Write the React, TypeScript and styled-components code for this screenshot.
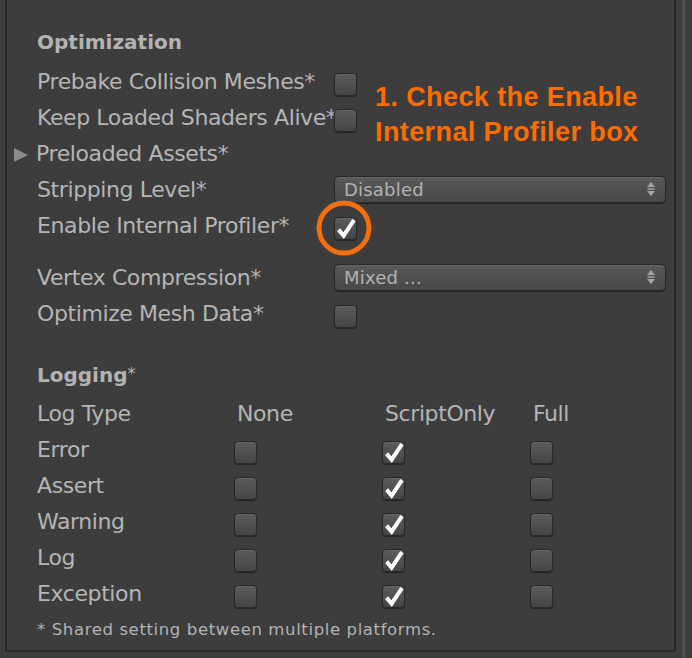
import React from "react";
import styled, { createGlobalStyle } from "styled-components";

const Global = createGlobalStyle`
  html, body { margin: 0; padding: 0; background: #3d3d3d; }
  body { font-family: "DejaVu Sans", "Open Sans", sans-serif; }
`;

const Page = styled.div`
  display: flex;
  align-items: flex-start;
  height: 658px;
  overflow: hidden;
`;

const Panel = styled.div`
  position: relative;
  box-sizing: border-box;
  width: 671px;
  margin-left: 5px;
  padding: 26px 7px 10px 30px;
  border: 2px solid #262626;
  border-top: none;
  border-radius: 0 0 3px 3px;
`;

const ScrollTrack = styled.div`
  width: 3px;
  height: 658px;
  margin-left: 6px;
  background: #4f4f4f;
`;

const SectionTitle = styled.div<{ $top?: number }>`
  height: 32px;
  line-height: 32px;
  margin-top: ${(p) => p.$top ?? 0}px;
  margin-bottom: 5px;
  font-size: 20px;
  font-weight: bold;
  color: #b3b3b3;
  white-space: nowrap;
`;

const TitleMark = styled.span`
  font-weight: normal;
  font-size: 16px;
  vertical-align: 3px;
`;

const Row = styled.div<{ $after?: number }>`
  display: grid;
  grid-template-columns: 297px 332px;
  align-items: center;
  height: 36px;
  margin-bottom: ${(p) => p.$after ?? 0}px;
`;

const Label = styled.span`
  font-size: 22px;
  letter-spacing: -0.4px;
  color: #b5b5b5;
  white-space: nowrap;
`;

const Foldout = styled.span`
  display: inline-block;
  width: 0;
  height: 0;
  margin-left: -23px;
  margin-right: 8px;
  border-top: 7.5px solid transparent;
  border-bottom: 7.5px solid transparent;
  border-left: 14px solid #8a8a8a;
  vertical-align: -1px;
`;

const Box = styled.span`
  position: relative;
  display: inline-block;
  box-sizing: border-box;
  width: 23px;
  height: 23px;
  margin-top: 6px;
  border: 1px solid #282828;
  border-radius: 4px;
  background: linear-gradient(#5b5b5b, #464646);
  box-shadow: inset 0 1px 0 rgba(255, 255, 255, 0.07), 0 1px 1px rgba(0, 0, 0, 0.45);
  justify-self: start;
`;

const CheckMark = styled.svg`
  position: absolute;
  left: -1px;
  top: -1px;
  overflow: visible;
`;

const Ring = styled.span`
  position: absolute;
  left: 50%;
  top: 50%;
  width: 55px;
  height: 55px;
  box-sizing: border-box;
  transform: translate(calc(-50% - 2px), -50%);
  border: 5px solid #f36e0f;
  border-radius: 50%;
  pointer-events: none;
`;

const Select = styled.div`
  display: flex;
  align-items: center;
  justify-content: space-between;
  box-sizing: border-box;
  height: 27px;
  padding: 0 10px 0 9px;
  border: 1px solid #2a2a2a;
  border-radius: 5px;
  background: linear-gradient(#5a5a5a, #474747);
  box-shadow: inset 0 1px 0 rgba(255, 255, 255, 0.07), 0 1px 1px rgba(0, 0, 0, 0.45);
  font-size: 18px;
  color: #b3b3b3;
  letter-spacing: 0.2px;
`;

const Annotation = styled.div`
  position: absolute;
  left: 368px;
  top: 80px;
  font-family: "Liberation Sans", Arial, sans-serif;
  font-weight: bold;
  font-size: 27px;
  line-height: 35px;
  letter-spacing: 0.4px;
  color: #ff6c00;
  white-space: nowrap;
`;

const LogGrid = styled.div`
  display: grid;
  grid-template-columns: 197px 148px 148px 1fr;
  grid-auto-rows: 36px;
  align-items: center;
`;

const ColHead = styled.span`
  padding-left: 3px;
  font-size: 22px;
  letter-spacing: -0.4px;
  color: #b5b5b5;
  white-space: nowrap;
`;

const Footnote = styled.div`
  height: 20px;
  line-height: 20px;
  margin-top: 9px;
  font-size: 16.5px;
  letter-spacing: 0.62px;
  color: #b3b3b3;
  white-space: nowrap;
`;

function Checkbox({ checked, ring }: { checked?: boolean; ring?: boolean }) {
  return (
    <Box>
      {checked && (
        <CheckMark width="23" height="23" viewBox="0 0 23 23">
          <polyline
            points="4.6,12.6 9.6,18.6 20,3.2"
            fill="none"
            stroke="#ffffff"
            strokeWidth="4"
            strokeLinejoin="miter"
          />
        </CheckMark>
      )}
      {ring && <Ring />}
    </Box>
  );
}

function SelectArrows() {
  return (
    <svg width="8" height="14" viewBox="0 0 8 14">
      <polygon points="4,0 8,5 0,5" fill="#a6a6a6" />
      <rect x="0.5" y="6.3" width="7" height="1.4" fill="#a6a6a6" />
      <polygon points="0,9 8,9 4,14" fill="#a6a6a6" />
    </svg>
  );
}

function Dropdown({ value }: { value: string }) {
  return (
    <Select>
      <span>{value}</span>
      <SelectArrows />
    </Select>
  );
}

const logRows: { name: string; values: [boolean, boolean, boolean] }[] = [
  { name: "Error", values: [false, true, false] },
  { name: "Assert", values: [false, true, false] },
  { name: "Warning", values: [false, true, false] },
  { name: "Log", values: [false, true, false] },
  { name: "Exception", values: [false, true, false] },
];

export default function App() {
  return (
    <>
      <Global />
      <Page>
        <Panel>
          <SectionTitle>Optimization</SectionTitle>
          <Row>
            <Label>Prebake Collision Meshes*</Label>
            <Checkbox />
          </Row>
          <Row>
            <Label>Keep Loaded Shaders Alive*</Label>
            <Checkbox />
          </Row>
          <Row>
            <Label>
              <Foldout />
              Preloaded Assets*
            </Label>
          </Row>
          <Row>
            <Label>Stripping Level*</Label>
            <Dropdown value="Disabled" />
          </Row>
          <Row $after={16}>
            <Label>Enable Internal Profiler*</Label>
            <Checkbox checked ring />
          </Row>
          <Row>
            <Label>Vertex Compression*</Label>
            <Dropdown value="Mixed ..." />
          </Row>
          <Row>
            <Label>Optimize Mesh Data*</Label>
            <Checkbox />
          </Row>

          <SectionTitle $top={27}>
            Logging<TitleMark>*</TitleMark>
          </SectionTitle>
          <LogGrid>
            <Label>Log Type</Label>
            <ColHead>None</ColHead>
            <ColHead>ScriptOnly</ColHead>
            <ColHead>Full</ColHead>
            {logRows.map((r) => (
              <React.Fragment key={r.name}>
                <Label>{r.name}</Label>
                {r.values.map((v, i) => (
                  <Checkbox key={i} checked={v} />
                ))}
              </React.Fragment>
            ))}
          </LogGrid>
          <Footnote>* Shared setting between multiple platforms.</Footnote>

          <Annotation>
            1. Check the Enable
            <br />
            Internal Profiler box
          </Annotation>
        </Panel>
        <ScrollTrack />
      </Page>
    </>
  );
}
